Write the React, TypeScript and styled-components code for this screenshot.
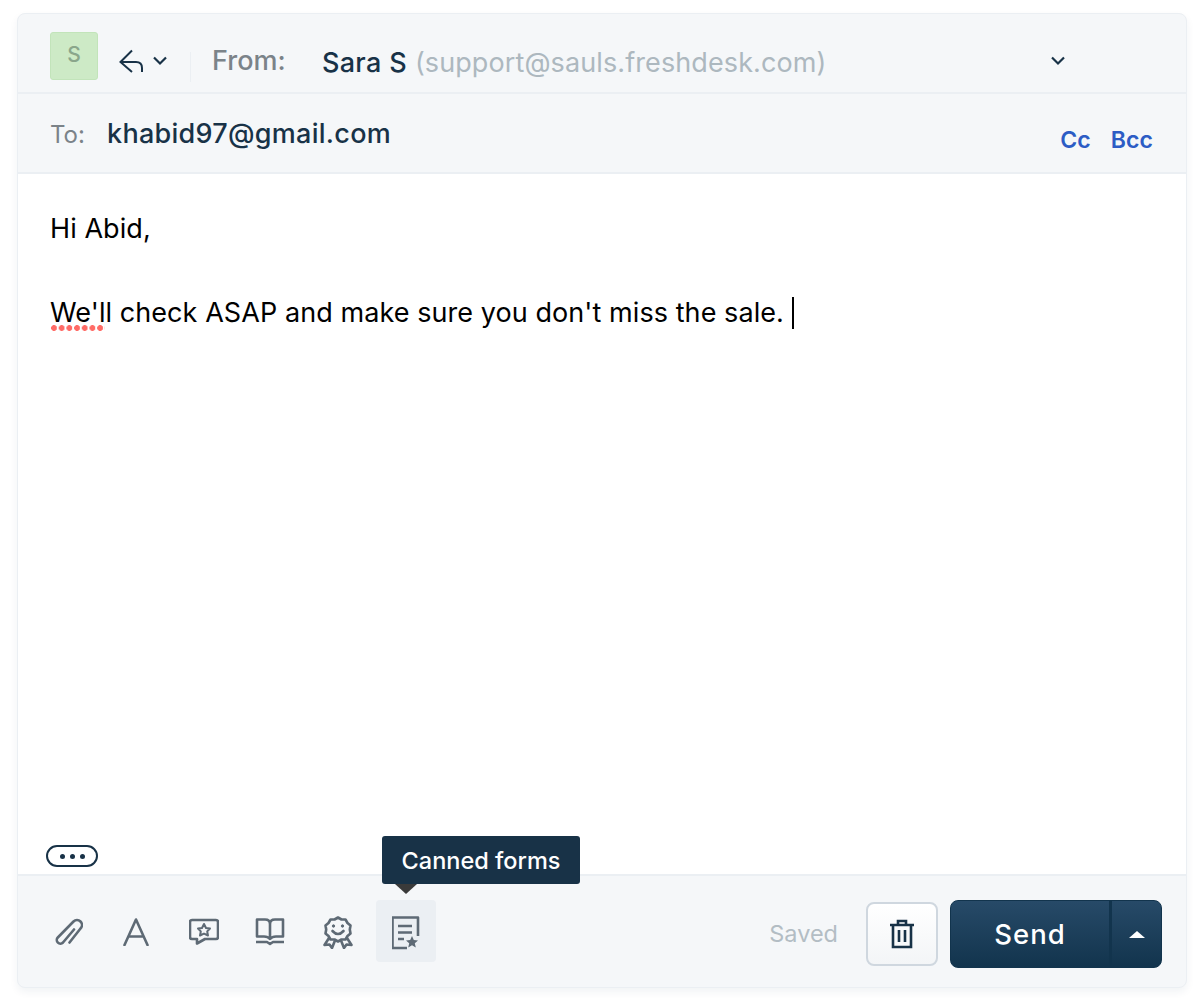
import { FC } from "react";
import styled, { createGlobalStyle } from "styled-components";

const GlobalStyle = createGlobalStyle`
  html, body {
    margin: 0;
    padding: 0;
    background: #fff;
    font-family: "Inter", "Liberation Sans", sans-serif;
  }
`;

const Page = styled.div`
  width: 1202px;
  height: 1004px;
  padding: 13px 15px 0 17px;
  box-sizing: border-box;
  overflow: hidden;
`;

const Card = styled.div`
  height: 975px;
  box-sizing: border-box;
  display: flex;
  flex-direction: column;
  background: #f5f7f9;
  border: 1px solid #ebeff3;
  border-radius: 8px;
  box-shadow: 0 4px 8px rgba(18, 52, 77, 0.06);
`;

const FromRow = styled.div`
  height: 80px;
  flex: none;
  box-sizing: border-box;
  display: flex;
  align-items: flex-start;
  padding: 18px 121px 0 32px;
  border-bottom: 2px solid #ebeff3;
`;

const Avatar = styled.div`
  width: 48px;
  height: 48px;
  box-sizing: border-box;
  display: flex;
  align-items: center;
  justify-content: center;
  background: #cdeac6;
  border: 1px solid #c2e4ba;
  border-radius: 3px;
  color: #8aa68b;
  font-size: 21px;
  font-weight: 500;
  padding-bottom: 4px;
`;

const ReplyIcon = styled.svg`
  width: 26px;
  height: 26px;
  margin: 15px 0 0 20px;
`;

const SmallChevron = styled.svg`
  width: 14px;
  height: 10px;
  margin: 24px 0 0 9px;
`;

const Divider = styled.div`
  width: 1px;
  height: 30px;
  margin: 20px 0 0 23px;
  background: #ebeff3;
`;

const FromLabel = styled.span`
  margin: 12px 0 0 21px;
  width: 110px;
  font-size: 27px;
  line-height: 34px;
  font-weight: 500;
  color: #7b8389;
`;

const SenderName = styled.span`
  margin-top: 14px;
  font-size: 27px;
  line-height: 34px;
  font-weight: 500;
  letter-spacing: 0.3px;
  color: #183247;
`;

const SenderMail = styled.span`
  margin: 14px 0 0 8px;
  flex: 1;
  font-size: 27px;
  line-height: 34px;
  letter-spacing: 0.1px;
  color: #adb8bf;
`;

const ToRow = styled.div`
  height: 80px;
  flex: none;
  box-sizing: border-box;
  display: flex;
  align-items: flex-start;
  padding: 0 33px 0 32px;
  border-bottom: 2px solid #ebeff3;
`;

const ToLabel = styled.span`
  margin-top: 24px;
  width: 57px;
  font-size: 24px;
  line-height: 34px;
  color: #7b8389;
`;

const ToMail = styled.span`
  margin-top: 23px;
  flex: 1;
  font-size: 27px;
  line-height: 34px;
  font-weight: 500;
  letter-spacing: 0.28px;
  color: #183247;
`;

const CopyLink = styled.span<{ $gap?: number }>`
  margin: 29px 0 0 ${(p) => p.$gap ?? 0}px;
  font-size: 23px;
  line-height: 34px;
  font-weight: 600;
  letter-spacing: 0.1px;
  color: #2c5cc5;
`;

const Body = styled.div`
  position: relative;
  flex: 1;
  background: #fff;
  padding: 34px 32px 0 32px;
  font-size: 27px;
  letter-spacing: 0.07px;
  line-height: 42px;
  color: #000;
`;

const BodyLine = styled.div`
  height: 42px;
  display: flex;
  align-items: center;
  white-space: pre;
`;

const Misspelled = styled.span`
  position: relative;
  &::after {
    content: "";
    position: absolute;
    left: 1px;
    bottom: 3px;
    width: 54px;
    height: 6px;
    background-image: radial-gradient(circle at 3px 3px, #ff6b66 2.6px, transparent 3.2px);
    background-size: 7.7px 6px;
    background-repeat: repeat-x;
  }
`;

const Caret = styled.span`
  width: 2px;
  height: 32px;
  margin-left: 8px;
  background: #000;
`;

const MorePill = styled.div`
  position: absolute;
  left: 28px;
  bottom: 7px;
  width: 52px;
  height: 22px;
  box-sizing: border-box;
  display: flex;
  align-items: center;
  justify-content: center;
  gap: 5px;
  background: #fff;
  border: 2px solid #183247;
  border-radius: 11px;
`;

const Dot = styled.span`
  width: 5px;
  height: 5px;
  border-radius: 50%;
  background: #183247;
`;

const Footer = styled.div`
  height: 113px;
  flex: none;
  box-sizing: border-box;
  display: flex;
  align-items: flex-start;
  padding: 24px 24px 0 0;
  border-top: 2px solid #ebeff3;
`;

const Tools = styled.div`
  flex: 1;
  display: flex;
  align-items: flex-start;
  padding-left: 22px;
`;

const Tool = styled.div<{ $width: number; $active?: boolean }>`
  position: relative;
  width: ${(p) => p.$width}px;
  height: 62px;
  margin-left: ${(p) => (p.$active ? 6 : 0)}px;
  display: flex;
  align-items: center;
  justify-content: center;
  border-radius: 4px;
  background: ${(p) => (p.$active ? "#ebeff3" : "transparent")};
`;

const ToolIcon = styled.svg<{ $drop?: number }>`
  margin-top: ${(p) => p.$drop ?? 0}px;
  fill: none;
  stroke: #5e6a75;
  stroke-width: 2.6;
  stroke-linejoin: round;
`;

const Tooltip = styled.div`
  position: absolute;
  left: 6px;
  top: -64px;
  height: 48px;
  width: 198px;
  box-sizing: border-box;
  display: flex;
  align-items: center;
  justify-content: center;
  background: #183247;
  border-radius: 3px;
  color: #fff;
  font-size: 23.5px;
  font-weight: 500;
  white-space: nowrap;
  &::after {
    content: "";
    position: absolute;
    left: 13px;
    top: 48px;
    border-style: solid;
    border-width: 10px 11px 0 11px;
    border-color: #3a3a3a transparent transparent transparent;
  }
`;

const Saved = styled.span`
  margin: 17px 28px 0 0;
  font-size: 23.5px;
  line-height: 34px;
  color: #b3bdc4;
`;

const TrashButton = styled.div`
  width: 72px;
  height: 64px;
  margin: 2px 12px 0 0;
  box-sizing: border-box;
  display: flex;
  align-items: center;
  justify-content: center;
  background: linear-gradient(180deg, #ffffff 0%, #f3f5f7 100%);
  border: 2px solid #cfd7df;
  border-radius: 8px;
`;

const SendGroup = styled.div`
  width: 212px;
  height: 68px;
  display: flex;
  border: 1px solid #12344d;
  box-sizing: border-box;
  border-radius: 8px;
  overflow: hidden;
  background: linear-gradient(180deg, #274a68 0%, #12344d 100%);
  color: #fff;
`;

const SendLabel = styled.div`
  width: 158px;
  flex: none;
  display: flex;
  align-items: center;
  justify-content: center;
  font-size: 27.5px;
  font-weight: 500;
  letter-spacing: 1px;
  border-right: 3px solid #12344d;
`;

const SendCaret = styled.div`
  flex: 1;
  display: flex;
  align-items: center;
  justify-content: center;
  &::before {
    content: "";
    border-style: solid;
    border-width: 0 8px 7px 8px;
    border-color: transparent transparent #fff transparent;
  }
`;

const Chevron: FC = () => (
  <path d="M1 1.5 L7 7.5 L13 1.5" fill="none" stroke="#183247" strokeWidth="2.2" />
);

const App: FC = () => {
  return (
    <Page>
      <GlobalStyle />
      <Card>
        <FromRow>
          <Avatar>S</Avatar>
          <ReplyIcon viewBox="0 0 26 26">
            <path
              d="M14 3.5 L2.5 15 L14 25 M2.5 15 H18 Q24 15 24 21 V25"
              fill="none"
              stroke="#183247"
              strokeWidth="2"
            />
          </ReplyIcon>
          <SmallChevron viewBox="0 0 14 10">
            <Chevron />
          </SmallChevron>
          <Divider />
          <FromLabel>From:</FromLabel>
          <SenderName>Sara S</SenderName>
          <SenderMail>(support@sauls.freshdesk.com)</SenderMail>
          <SmallChevron viewBox="0 0 14 10">
            <Chevron />
          </SmallChevron>
        </FromRow>
        <ToRow>
          <ToLabel>To:</ToLabel>
          <ToMail>khabid97@gmail.com</ToMail>
          <CopyLink>Cc</CopyLink>
          <CopyLink $gap={20}>Bcc</CopyLink>
        </ToRow>
        <Body>
          <BodyLine>Hi Abid,</BodyLine>
          <BodyLine />
          <BodyLine>
            <Misspelled>We'll</Misspelled> check ASAP and make sure you don't miss the sale.
            <Caret />
          </BodyLine>
          <MorePill>
            <Dot />
            <Dot />
            <Dot />
          </MorePill>
        </Body>
        <Footer>
          <Tools>
            <Tool $width={58}>
              <ToolIcon width="28" height="28" viewBox="0 0 28 28">
                <path d="M14.5 25.5 L25.5 11.5 A4.7 4.7 0 0 0 18.5 4.5 L2.8 20.5 A3.6 3.6 0 0 0 8 25.5 L19 12.5" strokeLinecap="round" />
              </ToolIcon>
            </Tool>
            <Tool $width={76}>
              <ToolIcon width="26" height="28" viewBox="0 0 26 28" $drop={1}>
                <path d="M1.5 27 L13 1.5 L24.5 27 M5.5 18.5 H20.5" strokeLinecap="round" />
              </ToolIcon>
            </Tool>
            <Tool $width={60}>
              <ToolIcon width="30" height="28" viewBox="0 0 30 28" $drop={1}>
                <path d="M3 2 H27 Q29 2 29 4 V19 Q29 21 27 21 H16 L8 25.5 V21 H3 Q1 21 1 19 V4 Q1 2 3 2 Z" />
                <path d="M15 6 L17 10 L21 10.5 L18.2 13.4 L19 17.5 L15 15.6 L11 17.5 L11.8 13.4 L9 10.5 L13 10 Z" strokeWidth="2" />
              </ToolIcon>
            </Tool>
            <Tool $width={72}>
              <ToolIcon width="30" height="28" viewBox="0 0 30 28" $drop={1}>
                <path d="M15 21 Q13 18.5 9 18.5 H2 V1.5 H10 Q15 1.5 15 6 V21 Q17 18.5 21 18.5 H28 V1.5 H20 Q15 1.5 15 6" />
                <path d="M1 24 H12 L15 26 L18 24 H29" />
              </ToolIcon>
            </Tool>
            <Tool $width={64}>
              <ToolIcon width="30" height="33" viewBox="0 0 30 33" $drop={2}>
                <path d="M15 1.5 L18.5 3.5 L22.5 3.5 L24.5 7 L27.5 9.5 L26.8 13.5 L27.5 17.5 L24.5 20 L22.5 23.5 L18.5 23.5 L15 25.5 L11.5 23.5 L7.5 23.5 L5.5 20 L2.5 17.5 L3.2 13.5 L2.5 9.5 L5.5 7 L7.5 3.5 L11.5 3.5 Z" />
                <path d="M9.5 15 Q15 21 20.5 15" strokeLinecap="round" />
                <circle cx="10.5" cy="10" r="1.2" fill="#5e6a75" strokeWidth="1" />
                <circle cx="19.5" cy="10" r="1.2" fill="#5e6a75" strokeWidth="1" />
                <path d="M6 22 L1.5 29 L6.5 28.5 L9 32 L12 24.5 M24 22 L28.5 29 L23.5 28.5 L21 32 L18 24.5" />
              </ToolIcon>
            </Tool>
            <Tool $width={60} $active>
              <Tooltip>Canned forms</Tooltip>
              <ToolIcon width="28" height="34" viewBox="1 0 28 34" $drop={3}>
                <path d="M27 20 V1.5 H1.5 V32 H16" />
                <path d="M7 10 H21 M7 16.5 H21 M7 23 H13" />
                <path
                  d="M21 20 L22.8 24 L27 24.4 L23.8 27.2 L24.8 31.4 L21 29.2 L17.2 31.4 L18.2 27.2 L15 24.4 L19.2 24 Z"
                  fill="#5e6a75"
                  stroke="none"
                />
              </ToolIcon>
            </Tool>
          </Tools>
          <Saved>Saved</Saved>
          <TrashButton>
            <svg width="24" height="30" viewBox="0 0 24 30">
              <path
                d="M0 6 H24 M8 6 V2 H16 V6 M3 6 V28 H21 V6 M9 11 V23 M15 11 V23"
                fill="none"
                stroke="#183247"
                strokeWidth="2.6"
              />
            </svg>
          </TrashButton>
          <SendGroup>
            <SendLabel>Send</SendLabel>
            <SendCaret />
          </SendGroup>
        </Footer>
      </Card>
    </Page>
  );
};

export default App;
